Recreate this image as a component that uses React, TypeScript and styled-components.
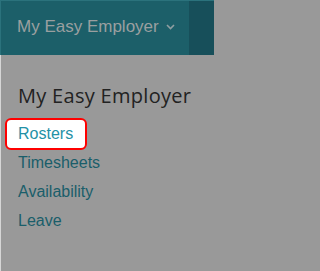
import styled, { createGlobalStyle } from 'styled-components';

const GlobalStyle = createGlobalStyle`
  html, body {
    margin: 0;
    padding: 0;
    background: #999999;
  }
  body {
    font-family: "Liberation Sans", Arial, sans-serif;
  }
`;

const links = ['Rosters', 'Timesheets', 'Availability', 'Leave'];

function App() {
  return (
    <>
      <GlobalStyle />
      <Page>
        <TopBar>
          <BrandButton>
            <BrandText>My Easy Employer</BrandText>
            <svg width="9" height="6" viewBox="0 0 9 6">
              <path d="M1 1 L4.5 4.5 L8 1" fill="none" stroke="#8f9ea1" strokeWidth="1.6" />
            </svg>
          </BrandButton>
          <BarEnd />
        </TopBar>
        <Panel>
          <Heading>My Easy Employer</Heading>
          <NavList>
            {links.map((l, i) => (
              <NavItem key={l}>
                <NavLink $active={i === 0}>{l}</NavLink>
              </NavItem>
            ))}
          </NavList>
        </Panel>
      </Page>
    </>
  );
}

export default App;

const Page = styled.div`
  width: 214px;
  height: 271px;
  display: flex;
  flex-direction: column;
  overflow: hidden;
`;

const TopBar = styled.header`
  height: 55px;
  display: flex;
  flex-shrink: 0;
  background-color: #1c5f69;
  border-top: 1px solid #2b727c;
  border-left: 1px solid #2b727c;
  box-sizing: border-box;
`;

const BrandButton = styled.div`
  width: 188px;
  display: flex;
  align-items: center;
  gap: 7px;
  padding-left: 16px;
  padding-bottom: 2px;
  box-sizing: border-box;
`;

const BrandText = styled.span`
  color: #9a9fa0;
  font-size: 17px;
`;

const BarEnd = styled.div`
  flex: 1;
  background-color: #174f5a;
`;

const Panel = styled.nav`
  flex: 1;
  background-color: #999999;
  border-left: 1px solid #d6d6d6;
  padding: 29px 0 0 17px;
`;

const Heading = styled.h2`
  margin: 0 0 11px;
  font-family: "Open Sans", sans-serif;
  font-weight: 400;
  font-size: 20px;
  line-height: 24px;
  letter-spacing: 0.3px;
  color: #222222;
`;

const NavList = styled.ul`
  list-style: none;
  margin: 0;
  padding: 0;
  display: flex;
  flex-direction: column;
`;

const NavItem = styled.li`
  height: 29px;
  display: flex;
  align-items: center;
`;

const NavLink = styled.a<{ $active?: boolean }>`
  font-size: 16px;
  line-height: 18px;
  color: ${p => (p.$active ? '#2391a6' : '#1a5e6a')};
  text-decoration: none;
  margin-left: -13px;
  padding: 5px 12px 5px 11px;
  border-radius: 6px;
  border: 2px solid ${p => (p.$active ? '#ff0000' : 'transparent')};
  background-color: ${p => (p.$active ? '#ffffff' : 'transparent')};
`;
